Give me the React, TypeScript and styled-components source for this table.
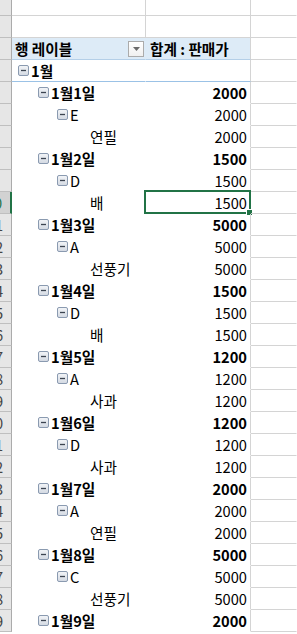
import React from "react";
import styled, { createGlobalStyle } from "styled-components";

const GlobalStyle = createGlobalStyle`
  html, body {
    margin: 0;
    padding: 0;
    background: #ffffff;
    overflow: hidden;
  }
  body {
    font-family: "Noto Sans CJK KR", "Noto Sans", sans-serif;
  }
`;

const GRID = "#D4D4D4";
const HEAD_LINE = "#BFBFBF";
const GREEN = "#217346";

const Sheet = styled.div`
  display: flex;
  flex-direction: column;
  width: 297px;
  font-family: "Noto Sans CJK KR", "Noto Sans", sans-serif;
  font-size: 14.67px;
  color: #000;
`;

const Row = styled.div<{ $h: number }>`
  display: grid;
  grid-template-columns: 12px 134px 105px 1fr;
  height: ${(p) => p.$h}px;
`;

const RowHead = styled.div<{ $selected?: boolean }>`
  box-sizing: border-box;
  display: flex;
  justify-content: flex-end;
  align-items: center;
  overflow: hidden;
  background: ${(p) => (p.$selected ? "#D2D2D2" : "#E6E6E6")};
  border-right: ${(p) => (p.$selected ? `2px solid ${GREEN}` : "1px solid #ABABAB")};
  border-bottom: 1px solid ${HEAD_LINE};
`;

const RowNum = styled.span<{ $selected?: boolean }>`
  flex: 0 0 32px;
  text-align: center;
  font-size: 14.67px;
  color: ${(p) => (p.$selected ? GREEN : "#444")};
`;

const Cell = styled.div<{
  $bottom?: string;
  $right?: string;
  $bg?: string;
  $align?: "left" | "right";
  $pad?: number;
  $bold?: boolean;
}>`
  box-sizing: border-box;
  position: relative;
  display: flex;
  align-items: center;
  justify-content: ${(p) => (p.$align === "right" ? "flex-end" : "flex-start")};
  padding-left: ${(p) => (p.$align === "right" ? 0 : p.$pad ?? 0)}px;
  padding-right: ${(p) => (p.$align === "right" ? p.$pad ?? 0 : 0)}px;
  background: ${(p) => p.$bg ?? "transparent"};
  border-bottom: 1px solid ${(p) => p.$bottom ?? "transparent"};
  border-right: 1px solid ${(p) => p.$right ?? "transparent"};
  font-weight: ${(p) => (p.$bold ? 700 : 400)};
  white-space: nowrap;
  line-height: 20px;
`;

const HeadLabel = styled.span`
  flex: 1;
  font-weight: 700;
`;

const DropButton = styled.div`
  box-sizing: border-box;
  width: 16px;
  height: 16px;
  margin-right: 1px;
  border: 1px solid #ABABAB;
  background: linear-gradient(#ffffff, #f0f0f0);
  display: flex;
  align-items: center;
  justify-content: center;
`;

const Label = styled.span`
  display: flex;
  align-items: center;
  gap: 2px;
`;

const Selection = styled.div`
  position: absolute;
  top: -2px;
  left: -2px;
  right: -1px;
  bottom: -1px;
  border: 2px solid ${GREEN};
  pointer-events: none;
`;

const Handle = styled.div`
  position: absolute;
  right: -3px;
  bottom: -3px;
  width: 5px;
  height: 5px;
  background: ${GREEN};
  box-shadow: 0 0 0 1px #ffffff;
`;

const MinusBox = () => (
  <svg width="11" height="11" viewBox="0 0 11 11" style={{ flexShrink: 0 }}>
    <defs>
      <linearGradient id="mb" x1="0" y1="0" x2="0" y2="1">
        <stop offset="0" stopColor="#F3F5F8" />
        <stop offset="1" stopColor="#D3D9E2" />
      </linearGradient>
    </defs>
    <rect x="0.5" y="0.5" width="10" height="10" rx="1.5" fill="url(#mb)" stroke="#8A9AB0" />
    <line x1="3" y1="5.5" x2="8" y2="5.5" stroke="#3C4450" strokeWidth="1.3" />
  </svg>
);

const DownArrow = () => (
  <svg width="7" height="4" viewBox="0 0 7 4">
    <polygon points="0,0 7,0 3.5,4" fill="#6A6A6A" />
  </svg>
);

type Item = { label: string; level: number; value?: string };

const items: Item[] = [
  { label: "1월", level: 0 },
  { label: "1월1일", level: 1, value: "2000" },
  { label: "E", level: 2, value: "2000" },
  { label: "연필", level: 3, value: "2000" },
  { label: "1월2일", level: 1, value: "1500" },
  { label: "D", level: 2, value: "1500" },
  { label: "배", level: 3, value: "1500" },
  { label: "1월3일", level: 1, value: "5000" },
  { label: "A", level: 2, value: "5000" },
  { label: "선풍기", level: 3, value: "5000" },
  { label: "1월4일", level: 1, value: "1500" },
  { label: "D", level: 2, value: "1500" },
  { label: "배", level: 3, value: "1500" },
  { label: "1월5일", level: 1, value: "1200" },
  { label: "A", level: 2, value: "1200" },
  { label: "사과", level: 3, value: "1200" },
  { label: "1월6일", level: 1, value: "1200" },
  { label: "D", level: 2, value: "1200" },
  { label: "사과", level: 3, value: "1200" },
  { label: "1월7일", level: 1, value: "2000" },
  { label: "A", level: 2, value: "2000" },
  { label: "연필", level: 3, value: "2000" },
  { label: "1월8일", level: 1, value: "5000" },
  { label: "C", level: 2, value: "5000" },
  { label: "선풍기", level: 3, value: "5000" },
  { label: "1월9일", level: 1, value: "2000" },
];

const indent = [6, 26, 45, 78];
const SELECTED = 6;

export default function App() {
  return (
    <>
      <GlobalStyle />
      <Sheet>
        <Row $h={16}>
          <RowHead>
            <RowNum>1</RowNum>
          </RowHead>
          <Cell $bottom={GRID} $right={GRID} />
          <Cell $bottom={GRID} $right={GRID} />
          <Cell $bottom={GRID} />
        </Row>
        <Row $h={22}>
          <RowHead>
            <RowNum>2</RowNum>
          </RowHead>
          <Cell $bottom={GRID} $right={GRID} />
          <Cell $bottom={GRID} $right={GRID} />
          <Cell $bottom={GRID} />
        </Row>
        <Row $h={22}>
          <RowHead>
            <RowNum>3</RowNum>
          </RowHead>
          <Cell $bg="#DDEBF7" $bottom="#B4CFE8" $pad={3}>
            <HeadLabel>행 레이블</HeadLabel>
            <DropButton>
              <DownArrow />
            </DropButton>
          </Cell>
          <Cell $bg="#DDEBF7" $bottom="#B4CFE8" $right={GRID} $pad={4} $bold>
            합계 : 판매가
          </Cell>
          <Cell $bottom={GRID} />
        </Row>
        {items.map((it, i) => {
          const selected = i === SELECTED;
          const line = i === 0 ? "#9BC2E6" : undefined;
          return (
            <Row $h={22} key={i}>
              <RowHead $selected={selected}>
                <RowNum $selected={selected}>{i + 4}</RowNum>
              </RowHead>
              <Cell $pad={indent[it.level]} $bold={it.level <= 1} $bottom={line}>
                <Label>
                  {it.level <= 2 && <MinusBox />}
                  {it.label}
                </Label>
              </Cell>
              <Cell $align="right" $pad={3} $bold={it.level <= 1} $bottom={line} $right={GRID}>
                {it.value}
                {selected && (
                  <Selection>
                    <Handle />
                  </Selection>
                )}
              </Cell>
              <Cell $bottom={GRID} />
            </Row>
          );
        })}
      </Sheet>
    </>
  );
}
